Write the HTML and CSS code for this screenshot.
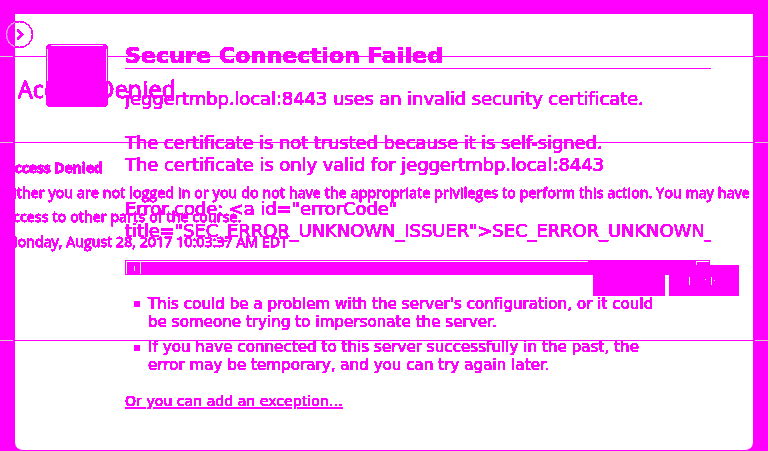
FILE: index.html
```
<!DOCTYPE html>
<html lang="en">
<head>
<meta charset="utf-8">
<title>Secure Connection Failed</title>
<link rel="stylesheet" href="styles.css">
</head>
<body>
<svg class="defs" width="0" height="0"><filter id="hard" x="0" y="0" width="1" height="1" color-interpolation-filters="sRGB"><feComponentTransfer><feFuncA type="linear" slope="30" intercept="-3"/></feComponentTransfer></filter></svg>
<div class="frame"><div class="sheet"></div></div>
<section class="denied">
  <div class="crumb line">
    <svg class="chevron" width="28" height="28" viewBox="0 0 28 28"><circle cx="13.500" cy="14.500" r="13"/><path class="pale" d="M9 2.300A13 13 0 0 0 9 26.700"/><path class="arrow" d="M11.500 10l4.500 4.500-4.500 5"/></svg>
  </div>
  <h2 class="denied-title line">Access Denied</h2>
  <div class="denied-body line">
    <p class="lead"><span>Access Denied</span></p>
    <p class="reason"><span>Either you are not logged in or you do not have the appropriate privileges to perform this action. You may have</span></p>
    <p class="reason2"><span>access to other parts of the course.</span></p>
    <p class="date"><span>Monday, August 28, 2017 10:03:37 AM EDT</span></p>
  </div>
</section>
<main class="error">
  <div class="badge"></div>
  <div class="content">
    <h1><span>Secure Connection Failed</span></h1>
    <div class="details">
      <p><span class="d1">jeggertmbp.local:8443 uses an invalid security certificate.</span></p>
      <p class="gap"><span class="d2">The certificate is not trusted because it is self-signed.</span></p>
      <p><span class="d3">The certificate is only valid for jeggertmbp.local:8443</span></p>
      <p class="gap"><span class="d4">Error code: &lt;a id="errorCode"</span></p>
      <p><span class="d5">title="SEC_ERROR_UNKNOWN_ISSUER"&gt;SEC_ERROR_UNKNOWN_</span></p>
    </div>
    <div class="scroll"></div>
    <ul>
      <li>This could be a problem with the server's configuration, or it could<br>be someone trying to impersonate the server.</li>
      <li>If you have connected to this server successfully in the past, the<br>error may be temporary, and you can try again later.</li>
    </ul>
    <a class="exception">Or you can add an exception…</a>
  </div>
</main>
<div class="buttons"><i></i><i class="ok"><b></b><b class="dot"></b><b></b><b class="dot low"></b></i></div>
</body>
</html>
```

FILE: styles.css
```
* { box-sizing: border-box; margin: 0; padding: 0; }
body { position: relative; width: 768px; height: 451px; overflow: hidden; background: #fff; color: #f0f; font-family: "DejaVu Sans", sans-serif; }
.defs { position: absolute; }
.frame { height: 451px; padding: 14px 15px 0; background: #f0f; }
.sheet { height: 437px; background: #fff; border-bottom: 1px solid #f0f; border-radius: 0 0 8px 8px; }
span, li, .exception { white-space: nowrap; -webkit-text-stroke: 0.15px #f0f; }

.denied { position: absolute; inset: 0; font-family: "Open Sans", sans-serif; filter: url(#hard); }
.denied span, .denied-title { -webkit-text-stroke: 0.35px #f0f; }
.line { border-bottom: 1px solid; border-image: linear-gradient(90deg, #f0f 1px, #d8c8d0 1px 14px, #f0f 14px 754px, #d8c8d0 754px) 1; }
.crumb { height: 57px; padding: 20px 0 0 6px; }
.chevron { display: block; fill: none; stroke: #f0f; stroke-width: 1; overflow: visible; }
.chevron .pale { stroke: #e0b8e0; }
.chevron .arrow { stroke-width: 2; }
.denied-title { height: 86px; padding: 17px 0 0 18px; font-size: 23px; letter-spacing: 0.32px; line-height: 30px; font-weight: 400; }
.denied-body { height: 198px; padding-top: 12px; font-size: 14px; line-height: 25px; }
.denied-body p { height: 25px; padding-left: 5px; }
.lead { font-weight: 700; letter-spacing: -0.1px; }
.reason, .reason2 { letter-spacing: 0.205px; }
.reason2 { line-height: 24px; }
.date { letter-spacing: 0.13px; line-height: 24px; }
.buttons { position: absolute; left: 593px; top: 265px; display: flex; gap: 4px; }
.buttons i { width: 72px; height: 31px; background: #f0f; }
.buttons .ok { width: 70px; display: flex; padding: 12px 0 0 20px; }
.ok b { width: 1px; height: 8px; background: #fff; }
.ok .dot { height: 1px; margin: 2px 5px 0 15px; }
.ok .low { margin: 3px 0 0 2px; }

.error { position: absolute; left: 46px; top: 44px; display: flex; gap: 17px; filter: url(#hard); }
.badge { width: 62px; height: 63px; border-radius: 5px; background: linear-gradient(#fff, #fff) 5px 1px / 52px 1px no-repeat, linear-gradient(#fff, #fff) 1px 5px / 1px 32px no-repeat, linear-gradient(#fff, #fff) 60px 5px / 1px 32px no-repeat, #f0f; }
.content { width: 586px; }
h1 { height: 25px; border-bottom: 1px solid #f0f; font-size: 22px; letter-spacing: 0.16px; line-height: 24px; }
.details { padding-top: 19px; overflow: hidden; font-size: 18px; letter-spacing: -0.1px; line-height: 22px; }
.details p { height: 22px; }
.details .gap { margin-top: 22px; }
.d3, .d4, .d5 { letter-spacing: -0.08px; }
.scroll { height: 15px; margin-top: 18px; width: 585px; background: linear-gradient(90deg, transparent 1px, #fff 1px 463px, transparent 463px 572px, #fff 572px 584px, transparent 584px) 0 1px / 100% 1px no-repeat, linear-gradient(#fff, #fff) 1px 1px / 1px 13px no-repeat, linear-gradient(#fff, #fff) 15px 1px / 1px 13px no-repeat, linear-gradient(#fff, #fff) 571px 1px / 1px 4px no-repeat, linear-gradient(#fff, #fff) 9px 6px / 1px 5px no-repeat, linear-gradient(#222, #222) 578px 7px / 1px 1px no-repeat, #f0f; }
ul { list-style: none; padding: 20px 0 0 23px; font-size: 15px; letter-spacing: 0.08px; line-height: 18px; }
li { position: relative; margin-bottom: 7px; }
li::before { content: ""; position: absolute; left: -14px; top: 7px; width: 6px; height: 6px; background: #f0f; }
li:first-child::before { top: 6px; }
.exception { display: inline-block; margin-top: 10px; font-size: 14px; letter-spacing: 0.06px; line-height: 20px; text-decoration: underline; text-decoration-thickness: 2px; }
```
